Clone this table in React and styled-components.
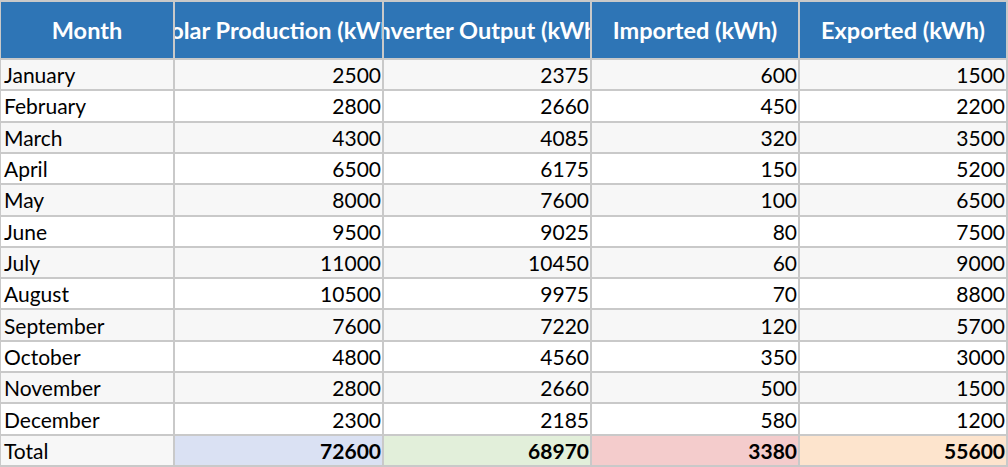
import React from 'react';
import styled, { createGlobalStyle } from 'styled-components';

const GlobalStyle = createGlobalStyle`
  html, body {
    margin: 0;
    padding: 0;
    background: #ffffff;
  }
  body {
    font-family: Lato, 'Liberation Sans', sans-serif;
  }
`;

const Sheet = styled.div`
  box-sizing: border-box;
  width: 1008px;
  height: 467px;
  display: grid;
  grid-template-columns: 172px 207px 206px 206px 1fr;
  grid-template-rows: 56px repeat(13, 1fr);
  gap: 2px;
  padding: 2px 2px 2px 1px;
  background: #c9c9c9;
`;

const HeadCell = styled.div`
  display: flex;
  align-items: center;
  justify-content: center;
  overflow: hidden;
  white-space: nowrap;
  background: #2e75b6;
  color: #ffffff;
  font-weight: 700;
  font-size: 23.5px;
`;

const Cell = styled.div`
  display: flex;
  align-items: center;
  justify-content: ${props => (props.$num ? 'flex-end' : 'flex-start')};
  padding: 0 ${props => (props.$num ? '1px' : '0')} 0 ${props => (props.$num ? '0' : '3px')};
  overflow: hidden;
  white-space: nowrap;
  background: ${props => props.$bg || (props.$striped ? '#f7f7f7' : '#ffffff')};
  color: #000000;
  font-size: 21px;
  font-weight: ${props => (props.$bold ? 700 : 400)};
`;

const headers = ['Month', 'Solar Production (kWh)', 'Inverter Output (kWh)', 'Imported (kWh)', 'Exported (kWh)'];

const rows = [
  ['January', 2500, 2375, 600, 1500],
  ['February', 2800, 2660, 450, 2200],
  ['March', 4300, 4085, 320, 3500],
  ['April', 6500, 6175, 150, 5200],
  ['May', 8000, 7600, 100, 6500],
  ['June', 9500, 9025, 80, 7500],
  ['July', 11000, 10450, 60, 9000],
  ['August', 10500, 9975, 70, 8800],
  ['September', 7600, 7220, 120, 5700],
  ['October', 4800, 4560, 350, 3000],
  ['November', 2800, 2660, 500, 1500],
  ['December', 2300, 2185, 580, 1200],
];

const totalColors = ['#dae1f3', '#e2efda', '#f4cccc', '#fde4cd'];

const App = () => {
  const totals = [1, 2, 3, 4].map(i => rows.reduce((sum, r) => sum + r[i], 0));
  return (
    <>
      <GlobalStyle />
      <Sheet>
        {headers.map(h => (
          <HeadCell key={h}>{h}</HeadCell>
        ))}
        {rows.map((row, r) =>
          row.map((value, c) => (
            <Cell key={`${r}-${c}`} $num={c > 0} $striped={r % 2 === 0}>
              {value}
            </Cell>
          ))
        )}
        <Cell $striped>Total</Cell>
        {totals.map((t, i) => (
          <Cell key={i} $num $bold $bg={totalColors[i]}>
            {t}
          </Cell>
        ))}
      </Sheet>
    </>
  );
};

export default App;
